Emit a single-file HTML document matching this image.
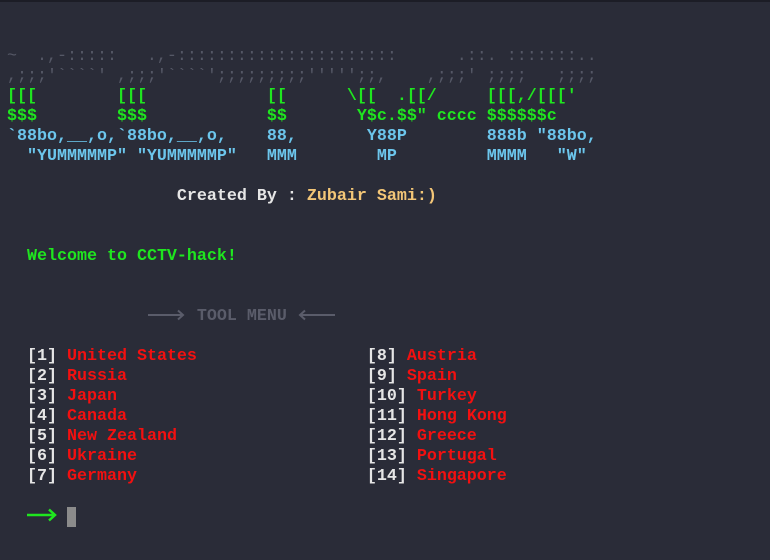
<!DOCTYPE html>
<html><head><meta charset="utf-8"><style>
html,body{margin:0;padding:0;}
body{width:770px;height:560px;background:#2a2c38;overflow:hidden;position:relative;}
.top{position:absolute;left:0;top:0;width:770px;height:2px;background:#1c1d26;}
pre{position:absolute;left:7px;top:7px;margin:0;font-family:"Liberation Mono",monospace;font-weight:bold;font-size:16.67px;line-height:20px;color:#e6e6e6;}
.d{color:#555866;font-weight:normal;}
.g{color:#1fe61f;}
.b{color:#6cc6ec;}
.r{color:#f31010;}
.y{color:#f3c677;}
.m{color:#5a5c6a;}
.cur{display:inline-block;width:9px;height:20px;background:#8b8b8b;vertical-align:top;}
svg{position:absolute;}
</style></head><body>
<div class="top"></div>
<pre>&#32;
&#32;
<span class="d">~  .,-:::::   .,-::::::::::::::::::::::      .::. :::::::..</span>
<span class="d">,;;;'&#96;&#96;&#96;&#96;' ,;;;'&#96;&#96;&#96;&#96;';;;;;;;;;''''';;,    ,;;;' ;;;;   ;;;;</span>
<span class="g">[[[        [[[            [[      \[[  .[[/     [[[,/[[['</span>
<span class="g">$$$        $$$            $$       Y$c.$$" cccc $$$$$$c</span>
<span class="b">&#96;88bo,__,o,&#96;88bo,__,o,    88,       Y88P        888b "88bo,</span>
<span class="b">  "YUMMMMMP" "YUMMMMMP"   MMM        MP         MMMM   "W"</span>
&#32;
                 Created By : <span class="y">Zubair Sami:)</span>
&#32;
&#32;
  <span class="g">Welcome to CCTV-hack!</span>
&#32;
&#32;
                   <span class="m">TOOL MENU</span>
&#32;
  [1] <span class="r">United States</span>                 [8] <span class="r">Austria</span>
  [2] <span class="r">Russia</span>                        [9] <span class="r">Spain</span>
  [3] <span class="r">Japan</span>                         [10] <span class="r">Turkey</span>
  [4] <span class="r">Canada</span>                        [11] <span class="r">Hong Kong</span>
  [5] <span class="r">New Zealand</span>                   [12] <span class="r">Greece</span>
  [6] <span class="r">Ukraine</span>                       [13] <span class="r">Portugal</span>
  [7] <span class="r">Germany</span>                       [14] <span class="r">Singapore</span>
&#32;
      <span class="cur"></span>
</pre>
<svg style="left:146px;top:308px" width="40" height="14" viewBox="0 0 40 14"><path d="M2 7H37M32 2.5L37 7L32 11.5" fill="none" stroke="#5a5c6a" stroke-width="2"/></svg>
<svg style="left:297px;top:308px" width="40" height="14" viewBox="0 0 40 14"><path d="M38 7H3M8 2.5L3 7L8 11.5" fill="none" stroke="#5a5c6a" stroke-width="2"/></svg>
<svg style="left:26px;top:507px" width="32" height="16" viewBox="0 0 32 16"><path d="M1 8H29M23 2.5L29 8L23 13.5" fill="none" stroke="#1fe61f" stroke-width="2.5"/></svg>
</body></html>
